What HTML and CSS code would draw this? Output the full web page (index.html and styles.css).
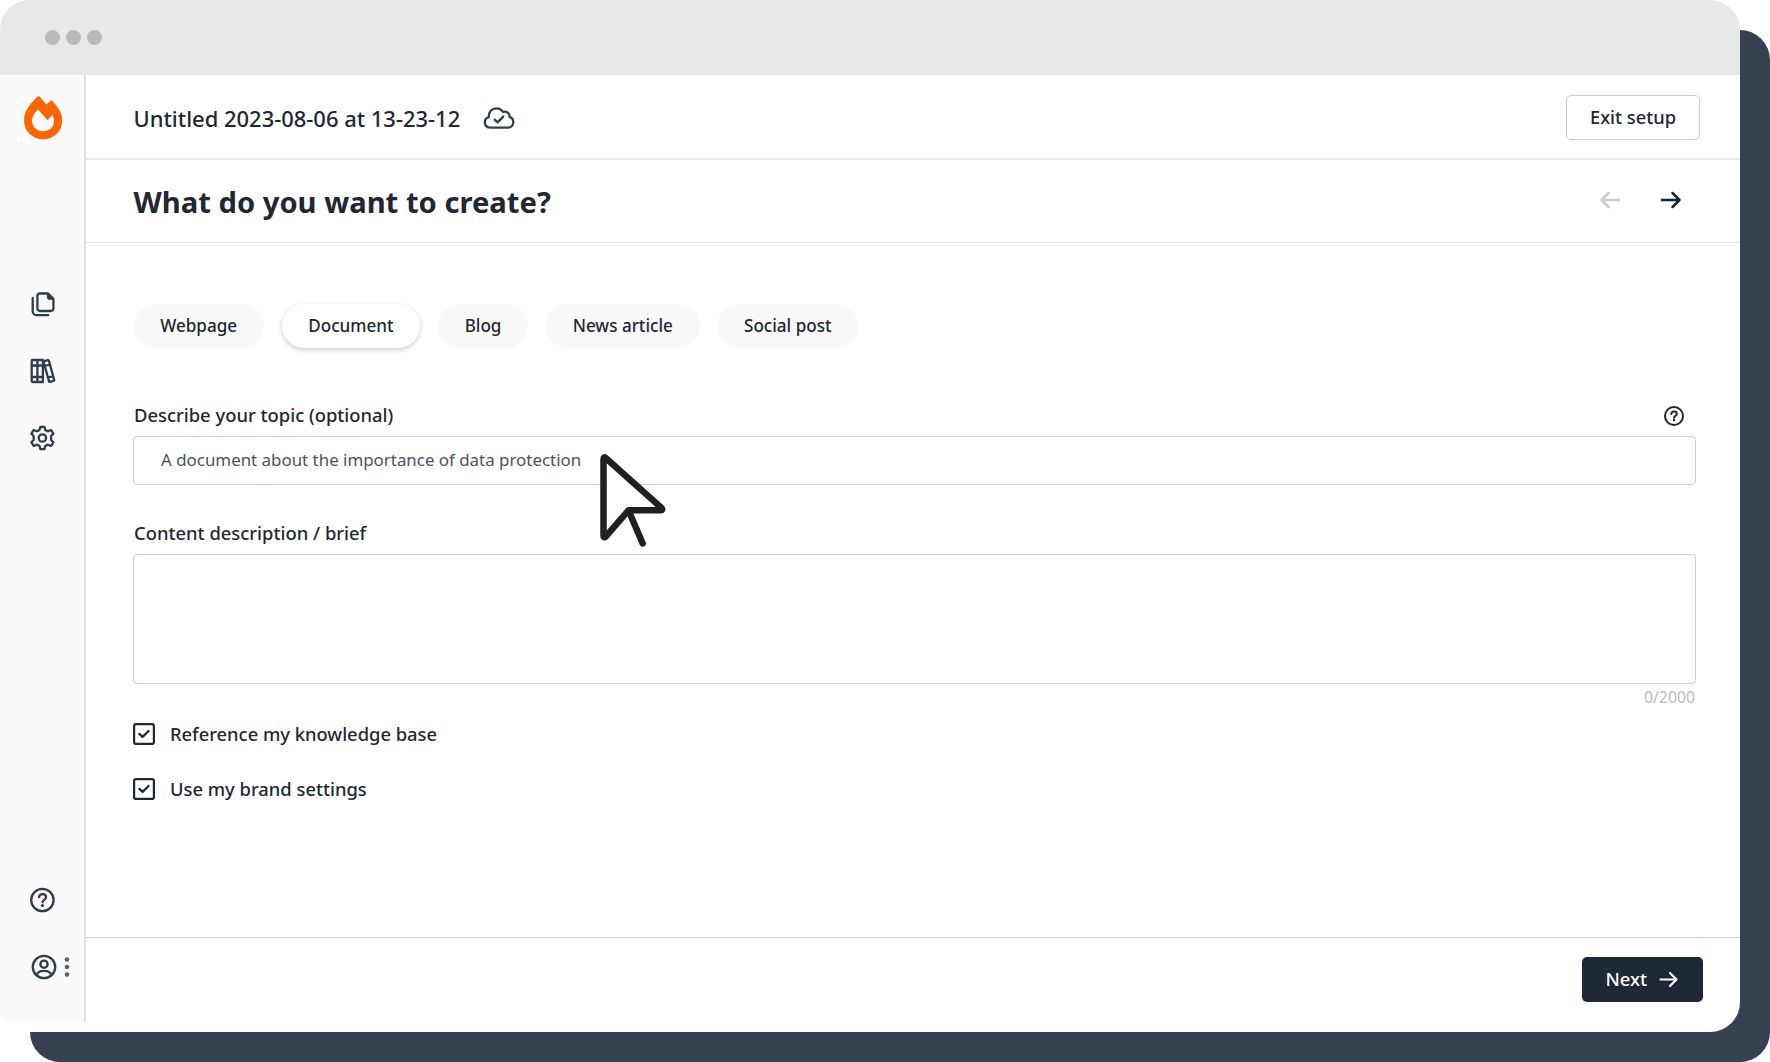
FILE: index.html
```html
<!DOCTYPE html>
<html lang="en">
<head>
<meta charset="utf-8">
<title>What do you want to create?</title>
<link rel="stylesheet" href="styles.css">
</head>
<body>
<div class="stage">
  <div class="window">
    <div class="titlebar"><i class="dot"></i><i class="dot"></i><i class="dot"></i></div>
    <div class="app">
      <nav class="sidebar">
        <svg class="logo" viewBox="0 0 40 45" width="40" height="45">
          <path fill="#fd6500" fill-rule="evenodd" d="M15.400 1.300Q16 .9 16.600 1.500L23.400 9.600L27.600 5.700Q28.600 5 29.400 5.900C34 11 39.300 17.500 39.300 25C39.300 36 31 44.300 20.200 44.300C9.300 44.300 1 36.200 1 25.300C1 16 8.500 6.800 15.400 1.300ZM15.200 14.500C11.500 17.800 9 21.500 9 25.600C9 32 14 36.300 20 36.300C26.300 36.300 31 32 31 26C31 23.500 30.400 21.700 29.400 20.200L24.400 24.900Z"/>
        </svg>
        <div class="nav-main">
          <svg width="28" height="28" viewBox="0 0 28 28" class="line">
            <path d="M11.500 3.500h8.200l5.300 5.300v9.700a2.500 2.500 0 0 1-2.500 2.500h-11a2.500 2.500 0 0 1-2.500-2.500V6a2.500 2.500 0 0 1 2.500-2.500z"/>
            <path d="M19 3.500v4.200a1.500 1.500 0 0 0 1.500 1.500H25z" fill="#323b4b" stroke-width="1"/>
            <path d="M4.300 8v13.200a4 4 0 0 0 4 4h11.500"/>
          </svg>
          <svg width="28" height="28" viewBox="0 0 28 28" class="line">
            <path d="M4.500 3h10v22h-10a1.200 1.200 0 0 1-1.200-1.200V4.200A1.200 1.200 0 0 1 4.500 3zM9 3v22M14.500 3v22M3.300 8.500h11.200M3.300 20h11.200"/>
            <path d="M15.300 5.300a1 1 0 0 1 .7-1.200l3.300-.9a1 1 0 0 1 1.200.7l5.300 18.800a1 1 0 0 1-.7 1.200l-3.300.9a1 1 0 0 1-1.200-.7zM16.300 9l5.300-1.500M19.700 20.500l5-1.400"/>
          </svg>
          <svg width="28" height="28" viewBox="0 0 28 28" class="line">
            <path d="M12 2.800h4l.9 3.200 2.300 1.300 3.500-1.300 2.300 3.600-2.300 2.700v3.400l2.300 2.700-2.300 3.600-3.500-1.300-2.300 1.300-.9 3.200h-4l-.9-3.200-2.300-1.300-3.500 1.300-2.300-3.600 2.300-2.700v-3.400L3 9.600 5.300 6l3.500 1.300L11.100 6z"/>
            <circle cx="14" cy="14" r="3.700"/>
          </svg>
        </div>
        <div class="nav-foot">
          <svg width="28" height="28" viewBox="0 0 28 28" class="line">
            <circle cx="14" cy="14" r="11.200"/>
            <path d="M10.600 11.200c.3-2 1.600-3 3.500-3 2 0 3.600 1.200 3.600 3.100 0 2.600-3.500 2.500-3.500 5"/>
            <circle cx="14.100" cy="19.500" r="1.500" fill="#323b4b" stroke="none"/>
          </svg>
          <div class="account">
            <svg width="28" height="28" viewBox="0 0 28 28" class="line">
              <circle cx="14" cy="14" r="11.200"/>
              <circle cx="14" cy="11.200" r="3.600"/>
              <path d="M6.500 22c1-2.900 3.300-4.200 7.500-4.200s6.500 1.300 7.500 4.200"/>
            </svg>
            <svg width="6" height="20" viewBox="0 0 6 20" fill="#5f6069"><circle cx="3" cy="2.500" r="2.300"/><circle cx="3" cy="10" r="2.300"/><circle cx="3" cy="17.500" r="2.300"/></svg>
          </div>
        </div>
      </nav>
      <main class="main">
        <header class="topbar">
          <span class="doc-name">Untitled 2023-08-06 at 13-23-12</span>
          <svg class="cloud" width="32" height="24" viewBox="0 0 32 24">
            <path d="M7.500 21.700C4 21.700 1.800 19.200 1.800 16.400c0-2.700 1.600-4.500 4-5.200C5.500 6 8.800 2.300 13.300 2.300c3 0 5.300 1.400 6.600 3.500 3.700-.9 6.800 1.400 6.700 5 2.300.8 3.700 2.800 3.700 5.200 0 3-2.200 5.700-5.600 5.700z"/>
            <path d="M11.600 13.700l3 2.700 5.600-5.800"/>
          </svg>
          <button class="btn exit">Exit setup</button>
        </header>
        <section class="heading">
          <h1>What do you want to create?</h1>
          <svg class="prev" width="22" height="18" viewBox="0 0 22 18"><path d="M20 9H2.500M9.500 2 2.500 9l7 7"/></svg>
          <svg class="next" width="22" height="18" viewBox="0 0 22 18"><path d="M2 9h17.500M12.500 2l7 7-7 7"/></svg>
        </section>
        <section class="form">
          <div class="chips">
            <button class="chip">Webpage</button>
            <button class="chip active">Document</button>
            <button class="chip">Blog</button>
            <button class="chip">News article</button>
            <button class="chip">Social post</button>
          </div>
          <div class="label-row">
            <label for="topic">Describe your topic (optional)</label>
            <svg width="22" height="22" viewBox="0 0 22 22" class="hint">
              <circle cx="11" cy="11" r="9"/>
              <path d="M8.300 8.900c.2-1.500 1.200-2.300 2.700-2.300 1.600 0 2.800.9 2.800 2.400 0 1.900-2.700 1.900-2.700 3.700"/>
              <circle cx="11.100" cy="15" r="1.200" fill="#1f2733" stroke="none"/>
            </svg>
          </div>
          <input id="topic" class="field topic" type="text" value="A document about the importance of data protection">
          <div class="label-row second"><label for="brief">Content description / brief</label></div>
          <textarea id="brief" class="field brief"></textarea>
          <div class="counter">0/2000</div>
          <div class="check">
            <svg width="22" height="22" viewBox="0 0 22 22"><rect x="1.100" y="1.100" width="19.800" height="19.800" rx="2"/><path d="M6.300 10.900l3.300 3 6-5.900"/></svg>
            <span>Reference my knowledge base</span>
          </div>
          <div class="check">
            <svg width="22" height="22" viewBox="0 0 22 22"><rect x="1.100" y="1.100" width="19.800" height="19.800" rx="2"/><path d="M6.300 10.900l3.300 3 6-5.900"/></svg>
            <span>Use my brand settings</span>
          </div>
        </section>
        <footer class="footer">
          <button class="btn go"><span>Next</span>
            <svg width="20" height="17" viewBox="0 0 20 17"><path d="M1.500 8.500h16M11 2l6.500 6.500L11 15"/></svg>
          </button>
        </footer>
      </main>
    </div>
  </div>
  <svg class="pointer" width="72" height="100" viewBox="0 0 72 100">
    <path d="M8.500 9.200c0-2 .9-2.300 2.200-1.200L66.200 57.600c1.600 1.500 1.200 2.600-.8 2.600H33.700L10.900 86.400c-1.200 1.500-2.400 1-2.400-.9z" fill="#fff"/>
    <path d="M34.200 62l13.500 31.500" fill="none"/>
  </svg>
</div>
</body>
</html>
```
FILE: styles.css
```css
* { box-sizing: border-box; }
body { margin: 0; background: #fff; color: #1f2733; font-family: "Noto Sans", "Open Sans", sans-serif; font-weight: 500; }
button, input, textarea { font: inherit; color: inherit; margin: 0; }
svg { display: block; flex: none; }

.stage { position: relative; width: 1770px; height: 1062px; overflow: hidden; }
.stage::before { content: ""; position: absolute; inset: 30px 0 0 30px; border-radius: 30px; background: #384151; }
.window { position: relative; width: 1740px; height: 1032px; background: #fff; border-radius: 30px 30px 30px 0; overflow: hidden; display: flex; flex-direction: column; }

.titlebar { height: 75px; flex: none; background: #e8e8e8; display: flex; align-items: center; gap: 6px; padding-left: 45px; }
.dot { width: 15px; height: 15px; border-radius: 50%; background: #b9b9b9; }
.app { flex: 1; display: flex; min-height: 0; }

.sidebar { width: 86px; margin-bottom: 11px; background: #fafafa; border-right: 2px solid #dfdfe1; border-bottom-left-radius: 10px; display: flex; flex-direction: column; padding: 20px 0 40px 23px; }
.nav-main { display: flex; flex-direction: column; gap: 39px; margin: 150px 0 0 5px; }
.nav-main svg, .nav-foot > svg { transform: translateX(.4px); }
.nav-foot { display: flex; flex-direction: column; gap: 39px; margin: auto 0 0 5px; }
.account { display: flex; align-items: center; gap: 6px; padding-left: 1.500px; }
.line { fill: none; stroke: #323b4b; stroke-width: 2.300; stroke-linejoin: round; stroke-linecap: round; }

.main { flex: 1; display: flex; flex-direction: column; }
.topbar { height: 85px; flex: none; border-bottom: 2px solid #eaeaec; display: flex; align-items: center; padding: 0 40px 0 47.500px; }
.doc-name { font-size: 21.950px; line-height: 30px; padding-top: 4px; }
.cloud { margin: 2px 0 0 23px; fill: none; stroke: #323b4b; stroke-width: 2.300; stroke-linecap: round; stroke-linejoin: round; }
.btn { height: 45px; border-radius: 5px; display: flex; align-items: center; justify-content: center; font-size: 18.300px; }
.exit { width: 134px; margin: 2px 0 0 auto; padding: 0 0 2px; background: #fff; border: 1px solid #cdced2; }
.heading { height: 83px; flex: none; border-bottom: 1px solid #e3e3e6; display: flex; align-items: center; padding: 0 58.500px 0 47.500px; }
h1 { margin: 2px auto 0 0; font-size: 29.200px; line-height: 40px; font-weight: 700; }
.prev, .next { fill: none; stroke-width: 2.500; stroke-linecap: round; stroke-linejoin: round; margin-bottom: 2px; }
.prev { stroke: #cbccd2; margin-right: 39px; }
.next { stroke: #1a2030; }

.form { flex: 1; padding: 61px 44px 0 46.500px; }
.chips { display: flex; gap: 17.800px; padding-left: 1px; }
.chip { height: 44px; padding: 0 26.700px 1px; border: 0; border-radius: 22px; background: #f9f9f9; font-size: 17.080px; }
.active { background: #fff; box-shadow: 0 2px 5px rgba(0,0,0,.2); }
.label-row { display: flex; align-items: center; justify-content: space-between; height: 24px; margin-top: 55px; padding: 0 11px 0 1.500px; font-size: 18.400px; line-height: 24px; }
.label-row.second { margin-top: 36px; }
.hint { margin-top: 1px; fill: none; stroke: #1f2733; stroke-width: 2; stroke-linecap: round; }
.field { display: block; width: 1563.500px; border: 1px solid #cdced1; border-radius: 4px; background: #fff; outline: 0; resize: none; }
.topic { height: 49px; margin-top: 9px; padding: 0 27.500px 3px; font-size: 16.900px; font-weight: 400; color: #4c5360; }
.brief { height: 130px; margin-top: 9px; }
.counter { height: 28px; line-height: 27px; padding-right: 1px; text-align: right; font-size: 15.800px; font-weight: 400; color: #b9bac1; }
.check { display: flex; align-items: center; gap: 15px; height: 24px; margin: 10px 0 0 .500px; font-size: 18.350px; }
.check span { margin-top: -2px; }
.check + .check { margin-top: 31px; }
.check svg { fill: none; stroke: #1f2733; stroke-width: 2.200; stroke-linecap: round; stroke-linejoin: round; }

.footer { height: 95px; flex: none; border-top: 1px solid #cbcfd4; display: flex; justify-content: flex-end; padding: 19px 37.500px 0 0; }
.go { width: 120.500px; padding: 0; border: 0; background: #1e2836; color: #fff; gap: 12px; }
.go span { margin-top: -2px; font-size: 18.500px; }
.go svg { margin-top: -1px; fill: none; stroke: #fff; stroke-width: 2.200; stroke-linecap: round; stroke-linejoin: round; }

.pointer { position: absolute; left: 595px; top: 450px; stroke: #231f20; stroke-width: 6.500; stroke-linecap: round; stroke-linejoin: round; }
```
